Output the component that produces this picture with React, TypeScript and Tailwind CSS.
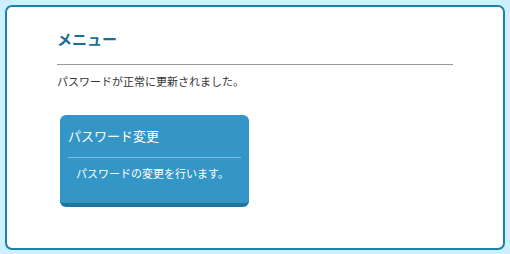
export default function App() {
  const font = { fontFamily: '"Noto Sans CJK JP", "Noto Sans", sans-serif' };
  return (
    <div className="w-[510px] h-[254px] bg-[#ccf0fc] pt-[5px] pl-[5px]" style={font}>
      <div className="w-[500px] h-[245px] bg-white border-2 border-[#1c82ab] rounded-[7px] px-[50px] pt-[22px]">
        <h1 className="text-[15px] leading-[20px] font-bold text-[#1a6e96]">メニュー</h1>
        <div className="mt-[15px] h-px bg-[#9a9a9a]" />
        <p className="mt-[8px] text-[11px] leading-[16px] text-[#333333]">パスワードが正常に更新されました。</p>
        <div className="mt-[26px] ml-[3px] w-[189px] h-[92px] bg-[#3396c6] border-b-[4px] border-[#1d76a2] rounded-[6px] px-[8px] pt-[12px]">
          <div className="text-[13px] leading-[18px] text-white">パスワード変更</div>
          <div className="mt-[12px] h-px bg-[#7dbfe0]" />
          <div className="mt-[7px] pl-[8px] text-[11px] leading-[16px] text-white">パスワードの変更を行います。</div>
        </div>
      </div>
    </div>
  );
}
